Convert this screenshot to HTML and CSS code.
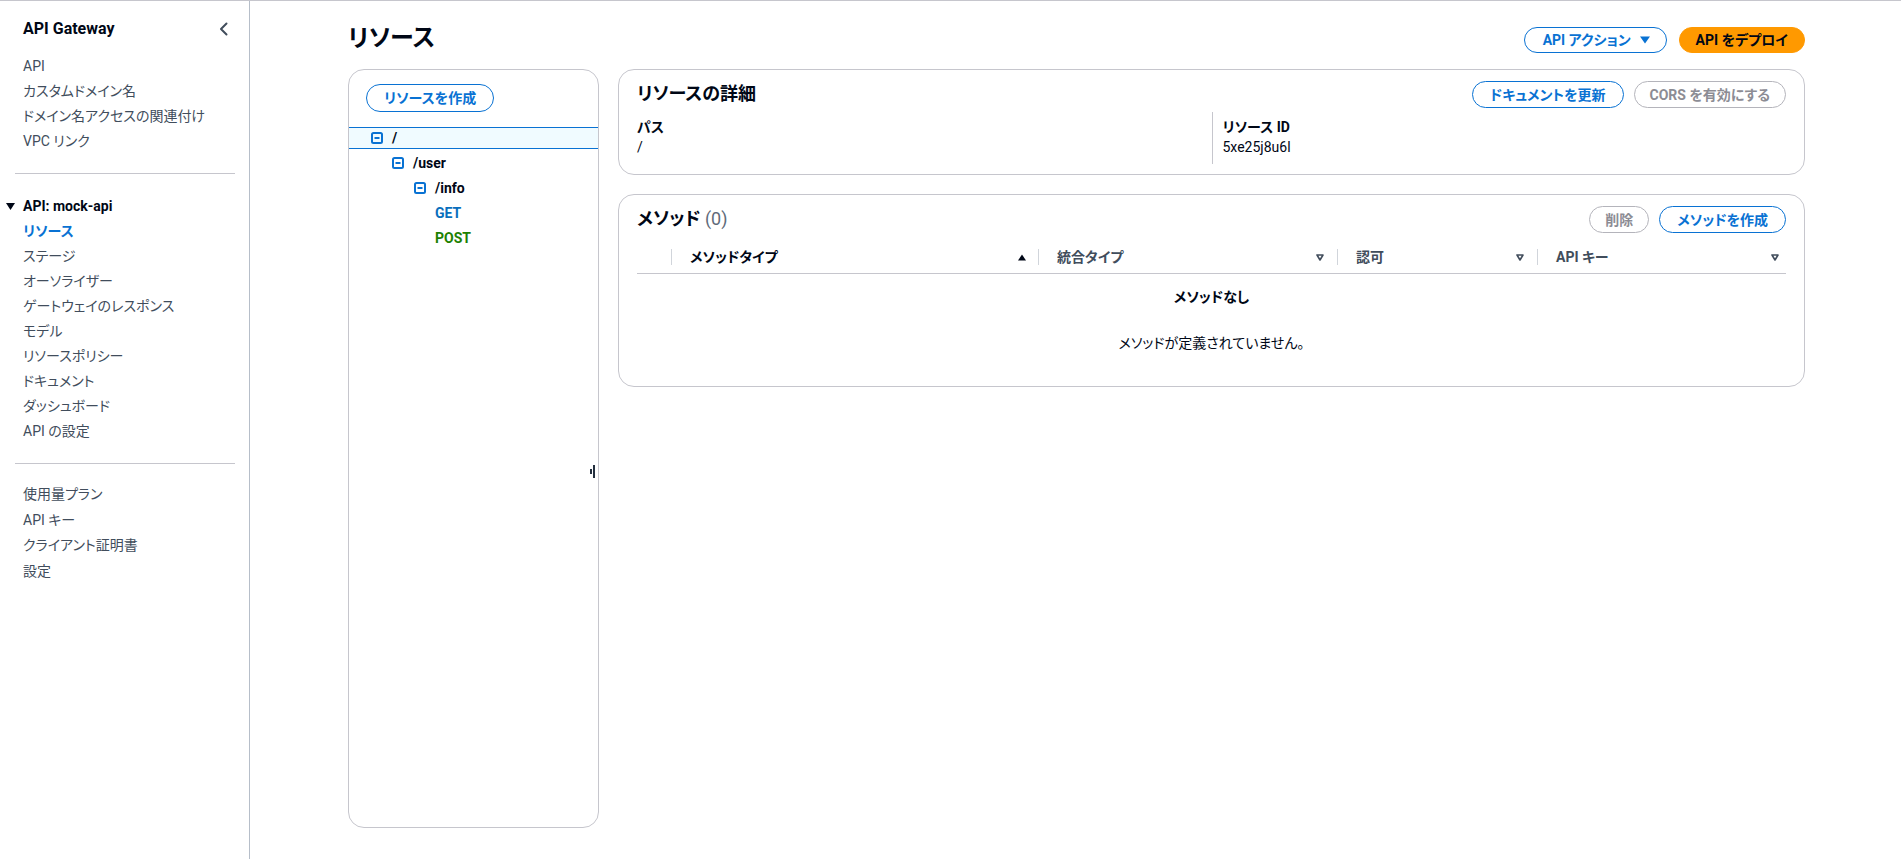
FILE: index.html
```html
<!DOCTYPE html>
<html lang="ja">
<head>
<meta charset="utf-8">
<title>リソース - API Gateway</title>
<link rel="stylesheet" href="styles.css">
</head>
<body>
<div class="app">
  <nav class="sidenav">
    <div class="sn-header">
      <span class="sn-title">API Gateway</span>
      <svg class="sn-close" width="16" height="16" viewBox="0 0 16 16"><path d="M10.5 2.5 5 8l5.5 5.5" fill="none" stroke="#414d5c" stroke-width="2" stroke-linecap="round" stroke-linejoin="round"/></svg>
    </div>
    <ul class="sn-list first">
      <li>API</li>
      <li>カスタムドメイン名</li>
      <li>ドメイン名アクセスの関連付け</li>
      <li>VPC リンク</li>
    </ul>
    <div class="sn-divider"></div>
    <ul class="sn-list section">
      <li class="sn-group"><svg width="9" height="7" viewBox="0 0 9 7"><path d="M0 0h9L4.5 7z" fill="#000716"/></svg><span>API: mock-api</span></li>
      <li class="active">リソース</li>
      <li>ステージ</li>
      <li>オーソライザー</li>
      <li>ゲートウェイのレスポンス</li>
      <li>モデル</li>
      <li>リソースポリシー</li>
      <li>ドキュメント</li>
      <li>ダッシュボード</li>
      <li>API の設定</li>
    </ul>
    <div class="sn-divider"></div>
    <ul class="sn-list last">
      <li>使用量プラン</li>
      <li>API キー</li>
      <li>クライアント証明書</li>
      <li>設定</li>
    </ul>
  </nav>

  <main class="main">
    <div class="page-header">
      <h1 class="page-title">リソース</h1>
      <div class="btn-group">
        <button class="btn btn-top btn-dropdown">API アクション<svg width="10" height="8" viewBox="0 0 10 8"><path d="M0 0.5h10L5 7.5z" fill="#0972d3"/></svg></button>
        <button class="btn btn-top btn-primary">API をデプロイ</button>
      </div>
    </div>

    <div class="split">
      <section class="tree-panel">
        <button class="btn btn-create">リソースを作成</button>
        <ul class="tree">
          <li class="node lv0 selected"><svg class="toggle" width="12" height="12" viewBox="0 0 12 12"><rect x="1" y="1" width="10" height="10" rx="1.5" fill="none" stroke="#0972d3" stroke-width="2"/><path d="M3.5 6h5" stroke="#0972d3" stroke-width="2"/></svg><span>/</span></li>
          <li class="node lv1"><svg class="toggle" width="12" height="12" viewBox="0 0 12 12"><rect x="1" y="1" width="10" height="10" rx="1.5" fill="none" stroke="#0972d3" stroke-width="2"/><path d="M3.5 6h5" stroke="#0972d3" stroke-width="2"/></svg><span>/user</span></li>
          <li class="node lv2"><svg class="toggle" width="12" height="12" viewBox="0 0 12 12"><rect x="1" y="1" width="10" height="10" rx="1.5" fill="none" stroke="#0972d3" stroke-width="2"/><path d="M3.5 6h5" stroke="#0972d3" stroke-width="2"/></svg><span>/info</span></li>
          <li class="node lv3 m-get">GET</li>
          <li class="node lv3 m-post">POST</li>
        </ul>
        <svg class="resize-handle" width="5" height="13" viewBox="0 0 5 13"><rect x="0" y="4" width="2" height="5" fill="#232f3e"/><rect x="3" y="0" width="2" height="13" fill="#232f3e"/></svg>
      </section>

      <div class="details">
        <section class="card card-details">
          <div class="card-head">
            <h2 class="card-title">リソースの詳細</h2>
            <div class="btn-group">
              <button class="btn">ドキュメントを更新</button>
              <button class="btn btn-disabled">CORS を有効にする</button>
            </div>
          </div>
          <div class="kv">
            <div class="kv-col">
              <div class="kv-label">パス</div>
              <div class="kv-value">/</div>
            </div>
            <div class="kv-col">
              <div class="kv-label">リソース ID</div>
              <div class="kv-value">5xe25j8u6l</div>
            </div>
          </div>
        </section>

        <section class="card card-methods">
          <div class="card-head">
            <h2 class="card-title">メソッド <span class="count">(0)</span></h2>
            <div class="btn-group">
              <button class="btn btn-disabled">削除</button>
              <button class="btn">メソッドを作成</button>
            </div>
          </div>
          <div class="thead">
            <div class="th th-select"></div>
            <div class="th sorted"><span>メソッドタイプ</span><svg width="8" height="7" viewBox="0 0 8 7"><path d="M0 6.5 4 0.5 8 6.5z" fill="#000716"/></svg></div>
            <div class="th"><span>統合タイプ</span><svg width="10" height="9" viewBox="0 0 10 9"><path d="M2 2h6L5 7z" fill="#fff" stroke="#414d5c" stroke-width="1.6" stroke-linejoin="round"/></svg></div>
            <div class="th"><span>認可</span><svg width="10" height="9" viewBox="0 0 10 9"><path d="M2 2h6L5 7z" fill="#fff" stroke="#414d5c" stroke-width="1.6" stroke-linejoin="round"/></svg></div>
            <div class="th th-last"><span>API キー</span><svg width="10" height="9" viewBox="0 0 10 9"><path d="M2 2h6L5 7z" fill="#fff" stroke="#414d5c" stroke-width="1.6" stroke-linejoin="round"/></svg></div>
          </div>
          <div class="empty">
            <div class="empty-title">メソッドなし</div>
            <div class="empty-desc">メソッドが定義されていません。</div>
          </div>
        </section>
      </div>
    </div>
  </main>
</div>
</body>
</html>
```

FILE: styles.css
```css
* { box-sizing: border-box; }

html, body {
  margin: 0;
  padding: 0;
  background: #ffffff;
}

body {
  font-family: Roboto, "Noto Sans CJK JP", sans-serif;
  font-size: 14px;
  line-height: 20px;
  color: #000716;
  font-feature-settings: "palt";
}

.app {
  display: flex;
  height: 859px;
  border-top: 1px solid #c6c6cd;
  overflow: hidden;
}

/* ---------- side navigation ---------- */
.sidenav {
  width: 250px;
  flex: none;
  border-right: 1px solid #b6bec9;
}

.sn-header {
  height: 39px;
  display: flex;
  align-items: flex-end;
  justify-content: space-between;
  padding: 0 17px 0 23px;
}

.sn-title {
  font-size: 16px;
  font-weight: 700;
  line-height: 22px;
  color: #000716;
}

.sn-close { margin-bottom: 3px; }

.sn-list {
  list-style: none;
  margin: 0;
  padding: 0;
}

.sn-list.first { margin-top: 14px; }
.sn-list.section { margin-top: 20px; }
.sn-list.last { margin-top: 18px; }

.sn-list li {
  height: 25px;
  line-height: 25px;
  padding-left: 23px;
  color: #414d5c;
  white-space: nowrap;
}

.sn-list.last li { height: 25.5px; line-height: 25.5px; }

.sn-list li.active {
  color: #0972d3;
  font-weight: 700;
}

.sn-list li.sn-group {
  display: flex;
  align-items: center;
  gap: 8px;
  padding-left: 6px;
  color: #000716;
  font-weight: 700;
}

.sn-divider {
  margin: 19px 14px 0 15px;
  border-top: 1px solid #c6c6cd;
}

/* ---------- main ---------- */
.main {
  flex: 1;
  min-width: 0;
  padding: 0 96px 0 98px;
}

.page-header {
  display: flex;
  align-items: flex-start;
  justify-content: space-between;
  margin-top: 26px;
  height: 26px;
}

.page-title {
  margin: -4px 0 0;
  font-size: 24px;
  line-height: 30px;
  font-weight: 700;
  color: #000716;
}

.btn-group {
  display: flex;
  gap: 10px;
}

.btn {
  display: inline-flex;
  align-items: center;
  justify-content: center;
  gap: 9px;
  height: 27px;
  padding: 0 17px;
  border: 1px solid #0972d3;
  border-radius: 20px;
  background: #ffffff;
  color: #0972d3;
  font-family: inherit;
  font-feature-settings: "palt";
  font-size: 14px;
  font-weight: 700;
  line-height: 20px;
  white-space: nowrap;
  cursor: pointer;
}

.btn-top { height: 26px; }
.btn-dropdown { padding: 0 16px 0 18px; }

.btn-group .btn-top + .btn-top { margin-left: 2px; }

.btn-primary {
  background: #ff9900;
  border-color: #ff9900;
  color: #000716;
  padding: 0 16px;
}

.btn-disabled {
  border-color: #b4b4bb;
  color: #8c8c94;
  padding: 0 15px;
  cursor: default;
}

.split {
  display: flex;
  gap: 19px;
  margin-top: 16px;
}

/* ---------- resource tree ---------- */
.tree-panel {
  position: relative;
  flex: none;
  width: 251px;
  height: 759px;
  border: 1px solid #c6c6cd;
  border-radius: 16px;
  padding-top: 14px;
}

.btn-create {
  height: 28px;
  margin-left: 17px;
}

.tree {
  list-style: none;
  margin: 15px 0 0;
  padding: 0;
  display: flex;
  flex-direction: column;
  gap: 3px;
}

.node {
  height: 22px;
  display: flex;
  align-items: center;
  gap: 9px;
  border-top: 1px solid transparent;
  border-bottom: 1px solid transparent;
  font-weight: 700;
  color: #000716;
}

.node.selected {
  background: #f0fbff;
  border-color: #0972d3;
}

.toggle { flex: none; }

.lv0 { padding-left: 22px; }
.lv1 { padding-left: 43px; }
.lv2 { padding-left: 65px; }
.lv3 { padding-left: 86px; }

.m-get { color: #0a6ebd; }
.m-post { color: #1d8102; }

.resize-handle {
  position: absolute;
  right: 3px;
  top: 395px;
}

/* ---------- detail cards ---------- */
.details {
  flex: 1;
  min-width: 0;
  display: flex;
  flex-direction: column;
  gap: 19px;
}

.card {
  border: 1px solid #c6c6cd;
  border-radius: 16px;
  padding: 11px 18px 10px;
}

.card-head {
  display: flex;
  align-items: center;
  justify-content: space-between;
  height: 27px;
}

.card-title {
  margin: -2px 0 0;
  font-size: 18px;
  line-height: 22px;
  font-weight: 700;
  color: #000716;
}

.card-title .count {
  font-weight: 400;
  color: #5f6b7a;
}

.kv {
  display: grid;
  grid-template-columns: 1fr 1fr;
  margin-top: 4px;
}

.kv-col {
  padding: 5px 0 7px;
}

.kv-col + .kv-col {
  border-left: 1px solid #c6c6cd;
  padding-left: 10px;
}

.kv-label { font-weight: 700; }

/* ---------- methods table ---------- */
.card-methods { padding-bottom: 33px; }

.thead {
  display: grid;
  grid-template-columns: 34px 367px 299px 200px 1fr;
  margin-top: 8px;
  padding: 8px 0;
  border-bottom: 1px solid #c6c6cd;
}

.th {
  height: 16px;
  display: flex;
  align-items: center;
  justify-content: space-between;
  padding: 0 12px 0 18px;
  border-left: 1px solid #d1d5db;
  font-weight: 700;
  line-height: 16px;
  color: #414d5c;
  white-space: nowrap;
}

.th-select { border-left: 0; }
.th.sorted { color: #000716; }
.th-last { padding-right: 6px; }

.empty {
  text-align: center;
  padding-top: 13px;
}

.empty-title { font-weight: 700; }

.empty-desc { margin-top: 26px; }
```
